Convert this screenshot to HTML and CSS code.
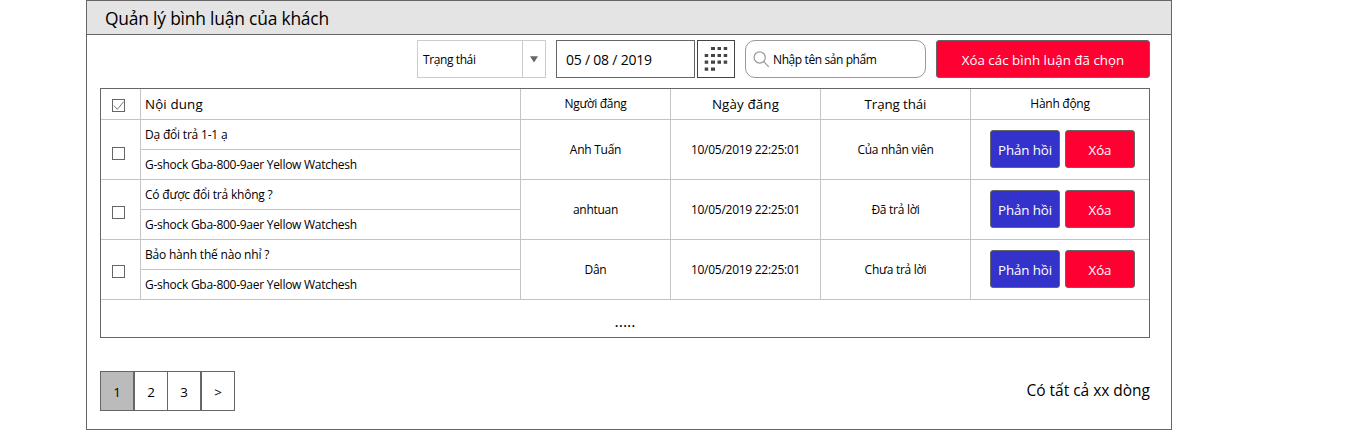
FILE: index.html
```html
<!DOCTYPE html>
<html lang="vi">
<head>
<meta charset="utf-8">
<title>Quản lý bình luận</title>
<link rel="stylesheet" href="styles.css">
</head>
<body>
<main class="panel">
  <header class="panel-head"><h1 class="title">Quản lý bình luận của khách</h1></header>
  <div class="toolbar">
    <div class="select">
      <span class="select-label">Trạng thái</span>
      <span class="select-arrow"><svg width="8" height="7" viewBox="0 0 8 7"><path d="M0 0.3H8L4 6.5Z" fill="#666"/></svg></span>
    </div>
    <div class="date">05 / 08 / 2019</div>
    <button class="calendar" aria-label="Lịch">
      <svg width="36" height="36" viewBox="0 0 36 36" fill="#444">
        <path d="M13 6h4v3h-4zM19.5 6h3.5v3h-3.5zM25.7 6h3.5v3h-3.5zM6.7 13h3.5v3h-3.5zM13 13h4v3h-4zM19.5 13h3.5v3h-3.5zM25.7 13h3.5v3h-3.5zM6.7 19.5h3.5v3.3h-3.5zM13 19.5h4v3.3h-4zM19.5 19.5h3.5v3.3h-3.5zM25.7 19.5h3.5v3.3h-3.5zM6.7 26.4h3.5v3.3h-3.5zM13 26.4h4v3.3h-4z"/>
      </svg>
    </button>
    <div class="search">
      <svg width="17" height="17" viewBox="0 0 17 17" fill="none" stroke="#999" stroke-width="1.2"><circle cx="6.7" cy="6.5" r="5.6"/><path d="M10.7 10.6L15.8 15.8"/></svg>
      <span>Nhập tên sản phẩm</span>
    </div>
    <button class="btn btn-red btn-wide">Xóa các bình luận đã chọn</button>
  </div>

  <div class="table">
    <div class="row head">
      <div class="cell check"><span class="box"><svg width="11" height="11" viewBox="0 0 11 11" fill="none" stroke="#777" stroke-width="1"><path d="M0.8 5.6L4.4 9.4L10.6 1.6"/></svg></span></div>
      <div class="cell left large">Nội dung</div>
      <div class="cell">Người đăng</div>
      <div class="cell large">Ngày đăng</div>
      <div class="cell large status">Trạng thái</div>
      <div class="cell">Hành động</div>
    </div>
    <div class="row body">
      <div class="cell check first"><span class="box"></span></div>
      <div class="cell content"><div class="line">Dạ đổi trả 1-1 ạ</div><div class="line product">G-shock Gba-800-9aer Yellow Watchesh</div></div>
      <div class="cell">Anh Tuấn</div>
      <div class="cell">10/05/2019 22:25:01</div>
      <div class="cell">Của nhân viên</div>
      <div class="cell actions"><button class="btn btn-blue">Phản hồi</button><button class="btn btn-red">Xóa</button></div>
    </div>
    <div class="row body">
      <div class="cell check second"><span class="box"></span></div>
      <div class="cell content"><div class="line">Có được đổi trả không ?</div><div class="line product">G-shock Gba-800-9aer Yellow Watchesh</div></div>
      <div class="cell">anhtuan</div>
      <div class="cell">10/05/2019 22:25:01</div>
      <div class="cell">Đã trả lời</div>
      <div class="cell actions"><button class="btn btn-blue">Phản hồi</button><button class="btn btn-red">Xóa</button></div>
    </div>
    <div class="row body">
      <div class="cell check third"><span class="box"></span></div>
      <div class="cell content"><div class="line">Bảo hành thế nào nhỉ ?</div><div class="line product">G-shock Gba-800-9aer Yellow Watchesh</div></div>
      <div class="cell">Dân</div>
      <div class="cell">10/05/2019 22:25:01</div>
      <div class="cell">Chưa trả lời</div>
      <div class="cell actions"><button class="btn btn-blue">Phản hồi</button><button class="btn btn-red">Xóa</button></div>
    </div>
    <div class="more">.....</div>
  </div>

  <footer class="footer">
    <nav class="pager"><span class="page current">1</span><span class="page">2</span><span class="page joined">3</span><span class="page">&gt;</span></nav>
    <span class="total">Có tất cả xx dòng</span>
  </footer>
</main>
</body>
</html>
```
FILE: styles.css
```css
* { box-sizing: border-box; }
body { margin: 0; background: #fff; color: #000; font: 12px/16px "Open Sans", "Noto Sans", sans-serif; }
button { margin: 0; padding: 0; font: inherit; }
svg { display: block; }
.panel { width: 1086px; height: 430px; margin-left: 86px; border: 1px solid #666; }
.panel-head { height: 34px; padding: 5px 0 0 18px; background: #e4e4e4; border-bottom: 1px solid #666; }
.title { display: inline-block; margin: 0; font-size: 17.4px; line-height: 25px; font-weight: 400; letter-spacing: -0.19px; }
.toolbar { display: flex; justify-content: flex-end; height: 38px; margin: 5px 21px 10px 0; }
.select { display: flex; width: 129px; border: 1px solid #ccc; margin-right: 10px; }
.select-label { width: 105px; padding: 11px 0 0 5px; border-right: 1px solid #ccc; letter-spacing: -0.4px; }
.select-arrow { padding: 15px 0 0 7px; }
.date { width: 139px; padding: 10px 0 0 9px; border: 1px solid #666; font-size: 14px; line-height: 18px; letter-spacing: -0.22px; margin-right: 2px; }
.calendar { width: 38px; border: 1px solid #444; background: #fff; margin-right: 10px; }
.search { display: flex; width: 181px; padding: 11px 0 0 7px; border: 1px solid #999; border-radius: 10px; margin-right: 10px; gap: 3px; letter-spacing: -0.4px; }
.search svg { margin-top: -1px; }
.btn { width: 70px; height: 38px; border: 1px solid #666; border-radius: 3px; color: #fff; font-size: 13.33px; letter-spacing: -0.1px; padding-top: 1px; white-space: nowrap; }
.btn-red { background: #ff0033; }
.btn-blue { background: #3333cc; }
.btn-wide { width: 214px; letter-spacing: 0.03px; }
.table { width: 1050px; height: 250px; margin-left: 13px; border: 1px solid #666; }
.row { display: grid; grid-template-columns: 40px 380px 150px 150px 150px 178px; border-bottom: 1px solid #c4c4c4; }
.head { height: 31px; }
.body { height: 60px; }
.cell { display: flex; align-items: center; justify-content: center; border-right: 1px solid #c4c4c4; letter-spacing: -0.27px; white-space: nowrap; }
.cell:last-child { border-right: 0; }
.left { justify-content: flex-start; padding-left: 4px; }
.large { font-size: 13.33px; letter-spacing: 0.15px; }
.status { letter-spacing: -0.1px; }
.check { align-items: flex-start; justify-content: flex-start; padding: 10px 0 0 11px; }
.first { padding-top: 27px; }
.second { padding-top: 26px; }
.third { padding-top: 25px; }
.box { width: 13px; height: 13px; border: 1px solid #666; }
.content { display: grid; grid-template-rows: 30px 29px; align-items: stretch; justify-content: stretch; }
.line { padding: 7px 0 0 4px; letter-spacing: -0.2px; }
.line:first-child { border-bottom: 1px solid #c4c4c4; }
.product { letter-spacing: -0.27px; }
.actions { justify-content: flex-start; align-items: flex-start; padding: 10px 0 0 19px; gap: 5px; }
.more { padding-top: 10px; text-align: center; font-size: 16px; line-height: 22px; }
.footer { display: flex; justify-content: space-between; margin: 33px 21px 0 13px; }
.pager { display: flex; }
.page { width: 34px; height: 40px; border: 1px solid #666; text-align: center; font-size: 13.33px; line-height: 40px; }
.current { background: #bbb; }
.joined { margin-left: -1px; }
.total { font-size: 15.5px; line-height: 38px; letter-spacing: -0.02px; }
```
